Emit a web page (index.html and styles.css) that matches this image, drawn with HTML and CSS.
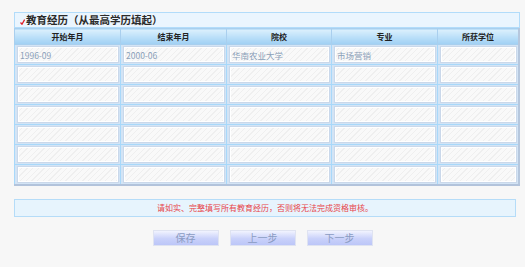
FILE: index.html
```html
<!DOCTYPE html>
<html lang="zh-CN">
  <head>
    <meta charset="UTF-8" />
    <meta name="viewport" content="width=device-width, initial-scale=1.0" />
    <title>教育经历</title>
    <link rel="stylesheet" href="styles.css">
  </head>
  <body>
    <div class="page">
      <div class="panel">
        <div class="panel-title">
          <svg class="check" width="5" height="6" viewBox="0 0 5 6">
            <path d="M0.5 3.5 L2 5.2 L4.6 0.6" fill="none" stroke="#e0202a" stroke-width="1.3" />
          </svg>
          教育经历（从最高学历填起）
        </div>
        <table class="edu-table">
          <colgroup>
            <col style="width: 106px" />
            <col style="width: 106px" />
            <col style="width: 105px" />
            <col style="width: 106px" />
            <col />
          </colgroup>
          <thead>
            <tr>
              <th>开始年月</th>
              <th>结束年月</th>
              <th>院校</th>
              <th>专业</th>
              <th>所获学位</th>
            </tr>
          </thead>
          <tbody>
            <tr>
              <td><input class="field" type="text" value="1996-09" /></td>
              <td><input class="field" type="text" value="2000-06" /></td>
              <td><input class="field" type="text" value="华南农业大学" /></td>
              <td><input class="field" type="text" value="市场营销" /></td>
              <td><input class="field" type="text" /></td>
            </tr>
            <tr>
              <td><input class="field" type="text" /></td>
              <td><input class="field" type="text" /></td>
              <td><input class="field" type="text" /></td>
              <td><input class="field" type="text" /></td>
              <td><input class="field" type="text" /></td>
            </tr>
            <tr>
              <td><input class="field" type="text" /></td>
              <td><input class="field" type="text" /></td>
              <td><input class="field" type="text" /></td>
              <td><input class="field" type="text" /></td>
              <td><input class="field" type="text" /></td>
            </tr>
            <tr>
              <td><input class="field" type="text" /></td>
              <td><input class="field" type="text" /></td>
              <td><input class="field" type="text" /></td>
              <td><input class="field" type="text" /></td>
              <td><input class="field" type="text" /></td>
            </tr>
            <tr>
              <td><input class="field" type="text" /></td>
              <td><input class="field" type="text" /></td>
              <td><input class="field" type="text" /></td>
              <td><input class="field" type="text" /></td>
              <td><input class="field" type="text" /></td>
            </tr>
            <tr>
              <td><input class="field" type="text" /></td>
              <td><input class="field" type="text" /></td>
              <td><input class="field" type="text" /></td>
              <td><input class="field" type="text" /></td>
              <td><input class="field" type="text" /></td>
            </tr>
            <tr>
              <td><input class="field" type="text" /></td>
              <td><input class="field" type="text" /></td>
              <td><input class="field" type="text" /></td>
              <td><input class="field" type="text" /></td>
              <td><input class="field" type="text" /></td>
            </tr>
          </tbody>
        </table>
      </div>

      <div class="notice">请如实、完整填写所有教育经历，否则将无法完成资格审核。</div>

      <div class="actions">
        <button class="btn" type="button">保存</button>
        <button class="btn" type="button">上一步</button>
        <button class="btn" type="button">下一步</button>
      </div>
    </div>
  </body>
</html>
```

FILE: styles.css
```css
body {
  margin: 0;
  padding: 0;
  background-color: #f7f7f7;
  font-family: "Noto Sans CJK SC", "Liberation Sans", sans-serif;
  color: #333;
}

.page {
  padding: 12px 0 0 14px;
}

.panel {
  width: 506px;
}

.panel-title {
  display: flex;
  align-items: center;
  height: 14px;
  padding-left: 5px;
  border: 1px solid #b2dcfa;
  background-color: #eaf5fe;
  font-size: 10.5px;
  font-weight: bold;
  line-height: 14px;
  color: #2a2a2a;
}

.check {
  margin-right: 1px;
  margin-top: 3px;
}

.edu-table {
  width: 506px;
  border-collapse: collapse;
  table-layout: fixed;
  border-right: 2px solid #b6c7dd;
  border-bottom: 2px solid #b2c3db;
}

.edu-table th {
  height: 15px;
  padding: 0;
  border: 1px solid #a9cfee;
  background: linear-gradient(#dcf0fd, #b6ddf8 60%, #9fcff3);
  font-size: 8px;
  font-weight: bold;
  line-height: 15px;
  color: #222;
}

.edu-table td {
  height: 17px;
  padding: 1px 1px 1px 2px;
  border: 1px solid #a8d8fa;
  background-color: #d3e4f5;
}

.field {
  display: block;
  box-sizing: border-box;
  width: 100%;
  height: 17px;
  margin: 0;
  padding: 0 2px;
  border: 1px solid #cad8ea;
  box-shadow: inset 0 0 0 1px #fff;
  outline: none;
  background: repeating-linear-gradient(135deg, #f9f9f9 0 3px, #efefef 3px 4px);
  font-family: "Noto Sans CJK SC", "Liberation Sans", sans-serif;
  font-size: 8.5px;
  color: #8aa0b8;
}

.notice {
  box-sizing: border-box;
  width: 502px;
  height: 18px;
  margin-top: 13px;
  border: 1px solid #b5dcf8;
  background-color: #e7f4fd;
  font-size: 8px;
  line-height: 16px;
  text-align: center;
  color: #e8454a;
}

.actions {
  display: flex;
  justify-content: center;
  gap: 11px;
  width: 497px;
  margin-top: 13px;
}

.btn {
  box-sizing: border-box;
  width: 66px;
  height: 16px;
  padding: 0;
  border: 1px solid #dfe3f1;
  background: linear-gradient(#f1f3fe, #c9d1fa 55%, #bcc6f8);
  font-family: "Noto Sans CJK SC", "Liberation Sans", sans-serif;
  font-size: 10px;
  line-height: 14px;
  color: #8a9bc2;
  cursor: pointer;
}
```
